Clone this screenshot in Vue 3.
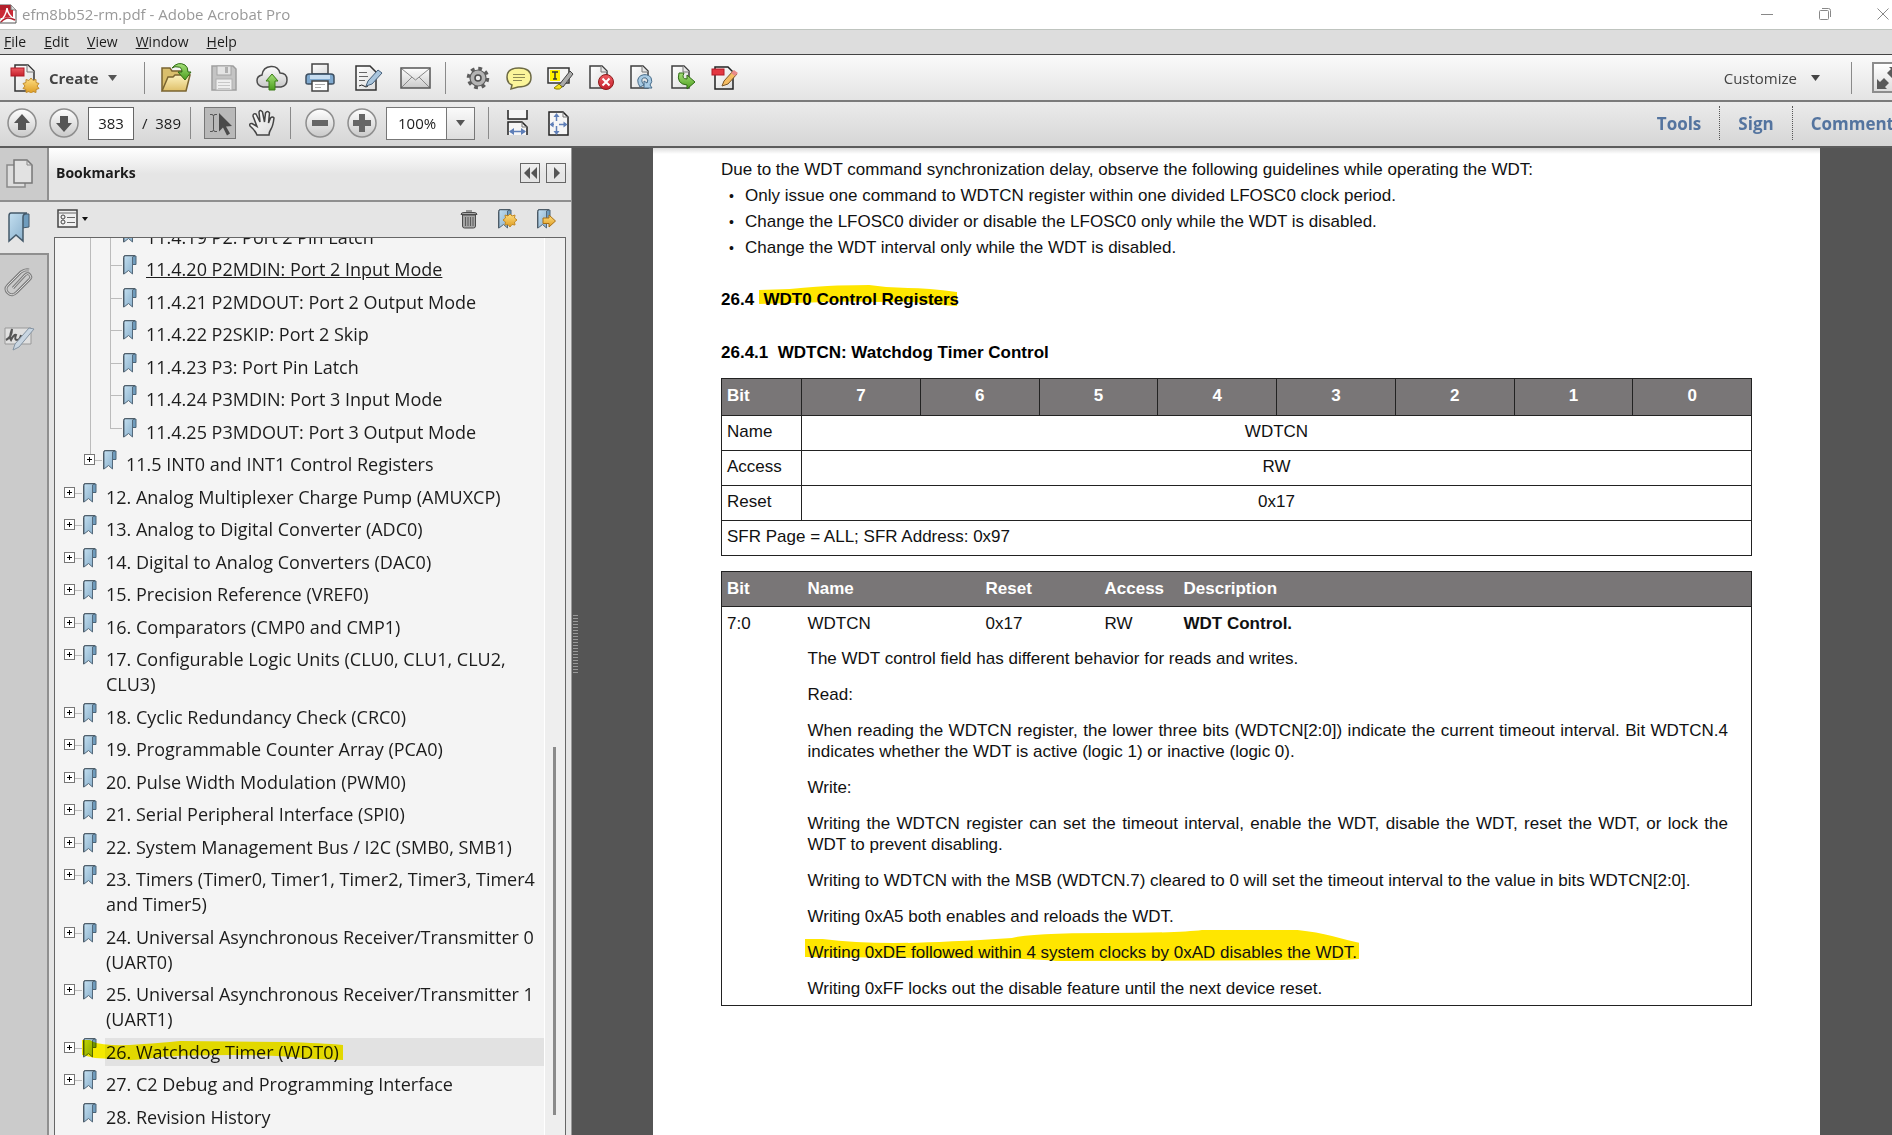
<script setup>
import { ref } from 'vue'

const page = ref('383')
const zoom = ref('100%')

const menus = ['File', 'Edit', 'View', 'Window', 'Help']

const bookmarks = [
  { level: 3, text: '11.4.19 P2: Port 2 Pin Latch' },
  { level: 3, text: '11.4.20 P2MDIN: Port 2 Input Mode', current: true },
  { level: 3, text: '11.4.21 P2MDOUT: Port 2 Output Mode' },
  { level: 3, text: '11.4.22 P2SKIP: Port 2 Skip' },
  { level: 3, text: '11.4.23 P3: Port Pin Latch' },
  { level: 3, text: '11.4.24 P3MDIN: Port 3 Input Mode' },
  { level: 3, text: '11.4.25 P3MDOUT: Port 3 Output Mode', last: true },
  { level: 2, text: '11.5 INT0 and INT1 Control Registers', children: true },
  { level: 1, text: '12. Analog Multiplexer Charge Pump (AMUXCP)', children: true },
  { level: 1, text: '13. Analog to Digital Converter (ADC0)', children: true },
  { level: 1, text: '14. Digital to Analog Converters (DAC0)', children: true },
  { level: 1, text: '15. Precision Reference (VREF0)', children: true },
  { level: 1, text: '16. Comparators (CMP0 and CMP1)', children: true },
  { level: 1, text: '17. Configurable Logic Units (CLU0, CLU1, CLU2, CLU3)', children: true },
  { level: 1, text: '18. Cyclic Redundancy Check (CRC0)', children: true },
  { level: 1, text: '19. Programmable Counter Array (PCA0)', children: true },
  { level: 1, text: '20. Pulse Width Modulation (PWM0)', children: true },
  { level: 1, text: '21. Serial Peripheral Interface (SPI0)', children: true },
  { level: 1, text: '22. System Management Bus / I2C (SMB0, SMB1)', children: true },
  { level: 1, text: '23. Timers (Timer0, Timer1, Timer2, Timer3, Timer4 and Timer5)', children: true },
  { level: 1, text: '24. Universal Asynchronous Receiver/Transmitter 0 (UART0)', children: true },
  { level: 1, text: '25. Universal Asynchronous Receiver/Transmitter 1 (UART1)', children: true },
  { level: 1, text: '26. Watchdog Timer (WDT0)', children: true, marked: true },
  { level: 1, text: '27. C2 Debug and Programming Interface', children: true },
  { level: 1, text: '28. Revision History' }
]

const bits = [7, 6, 5, 4, 3, 2, 1, 0]
const fields = [
  ['Name', 'WDTCN'],
  ['Access', 'RW'],
  ['Reset', '0x17']
]
</script>

<template>
  <div class="app">
    <svg class="defs" width="0" height="0" aria-hidden="true">
      <defs>
        <linearGradient id="g-blue" x1="0" y1="0" x2="1" y2="1">
          <stop offset="0" stop-color="#c3dff0" /><stop offset="1" stop-color="#85acc9" />
        </linearGradient>
        <linearGradient id="g-folder" x1="0" y1="0" x2="0" y2="1">
          <stop offset="0" stop-color="#fdf3c0" /><stop offset="1" stop-color="#dfc069" />
        </linearGradient>
        <linearGradient id="g-green" x1="0" y1="0" x2="0" y2="1">
          <stop offset="0" stop-color="#a5e07a" /><stop offset="1" stop-color="#4c9e1c" />
        </linearGradient>
        <linearGradient id="g-grey" x1="0" y1="0" x2="0" y2="1">
          <stop offset="0" stop-color="#ffffff" /><stop offset="1" stop-color="#c9c9c9" />
        </linearGradient>
        <linearGradient id="g-paper" x1="0" y1="0" x2="1" y2="1">
          <stop offset="0" stop-color="#ffffff" /><stop offset="1" stop-color="#dcdcdc" />
        </linearGradient>
        <linearGradient id="g-gold" x1="0" y1="0" x2="0" y2="1">
          <stop offset="0" stop-color="#ffe083" /><stop offset="1" stop-color="#dd9a1f" />
        </linearGradient>
        <linearGradient id="g-red" x1="0" y1="0" x2="0" y2="1">
          <stop offset="0" stop-color="#ee5b62" /><stop offset="1" stop-color="#c4202b" />
        </linearGradient>
        <symbol id="i-bookmark" viewBox="0 0 15 20">
          <path d="M9 1h5v8.500h-4z" fill="#6f9cbd" stroke="#4d6577" />
          <path d="M2.500.7h10L10.500 2v17L6.500 15.500 2 19V2z" fill="url(#g-blue)" stroke="#54697b" />
          <path d="M1.500 19.300V2.500Q1.500.6 3.500.6H13" fill="none" stroke="#4d5b66" />
        </symbol>
        <symbol id="i-page" viewBox="0 0 20 24">
          <path d="M1 1h12l5 5v17H1z" fill="url(#g-paper)" stroke="#3f3f3f" stroke-width="1.500" />
          <path d="M12 1v6h6" fill="#e8e8e8" stroke="#777" />
        </symbol>
      </defs>
    </svg>

    <header class="titlebar">
      <svg class="app-icon" width="17" height="20" viewBox="0 0 17 20">
        <path d="M0 1h11l5 5v13H0z" fill="#fff" stroke="#555" />
        <path d="M0 1h11v13H0z" fill="#b3202c" />
        <path d="M11 1v5h5" fill="#ddd" stroke="#777" />
        <path d="M0 6h13v8H0z" fill="#c92a35" />
        <path d="M0 17Q6 12 7 4Q8 12 15 15Q7 12 0 17" fill="none" stroke="#fff" stroke-width="1.500" />
        <path d="M1 18Q5 14 8 14T15 16" fill="none" stroke="#b3202c" stroke-width="1.500" />
      </svg>
      <h1>efm8bb52-rm.pdf - Adobe Acrobat Pro</h1>
      <div class="window-buttons">
        <button aria-label="Minimize"><svg width="14" height="14" viewBox="0 0 14 14"><path d="M1 7.500h12" stroke="#888" /></svg></button>
        <button aria-label="Restore"><svg width="14" height="14" viewBox="0 0 14 14"><rect x="1.500" y="3.500" width="9" height="9" rx="1" fill="none" stroke="#888" /><path d="M4 1.500h6.500q2 0 2 2V10" fill="none" stroke="#888" /></svg></button>
        <button aria-label="Close"><svg width="14" height="14" viewBox="0 0 14 14"><path d="M1.500 1.500l11 11m0-11l-11 11" stroke="#888" /></svg></button>
      </div>
    </header>

    <nav class="menubar">
      <button v-for="m in menus" :key="m"><u>{{ m[0] }}</u>{{ m.slice(1) }}</button>
    </nav>

    <div class="toolbar main-tools">
      <button class="create">
        <svg width="30" height="30" viewBox="0 0 30 30">
          <path d="M5 2h13l6 6v20H5z" fill="url(#g-paper)" stroke="#333" stroke-width="1.500" />
          <path d="M17 2v7h7" fill="#eee" stroke="#777" />
          <rect x="1" y="5" width="13" height="8" fill="url(#g-red)" stroke="#b01b26" />
          <path d="M21 15l2 2.500 3-1 0 3 3 1-2 2.500 2 2.500-3 1 0 3-3-1-2 2-2-2-3 1 0-3-3-1 2-2.500-2-2.500 3-1 0-3 3 1z" fill="url(#g-gold)" stroke="#c08c31" />
        </svg>
        <span>Create</span>
        <svg width="9" height="6" viewBox="0 0 9 6"><path d="M0 0h9L4.500 6z" fill="#555" /></svg>
      </button>
      <span class="sep"></span>
      <div class="group wide">
        <button aria-label="Open">
          <svg width="32" height="32" viewBox="0 0 32 32">
            <path d="M2 28V6h8l2 3h10v18z" fill="#d9be6c" stroke="#7a6430" stroke-width="1.500" />
            <path d="M2 29L8 15h5l2-2h15l-4 16z" fill="url(#g-folder)" stroke="#7a6430" stroke-width="1.500" />
            <path d="M12 6Q18-1 25 3Q28 5 28 10h3l-6 8-7-8h4Q22 5 18 5Q15 4 12 6z" fill="url(#g-green)" stroke="#2f6b14" />
          </svg>
        </button>
        <button aria-label="Save">
          <svg width="32" height="32" viewBox="0 0 32 32">
            <path d="M4 4h21l3 3v21H4z" fill="#c4c4c4" stroke="#9e9e9e" stroke-width="1.500" />
            <rect x="9" y="4" width="14" height="9" fill="#e4e4e4" stroke="#a4a4a4" />
            <rect x="17" y="5" width="3" height="6" fill="#b0b0b0" />
            <rect x="8" y="17" width="16" height="11" fill="#efefef" stroke="#b0b0b0" />
            <path d="M10 20.500h12M10 23.500h12M10 26.500h12" stroke="#c8c8c8" />
          </svg>
        </button>
        <button aria-label="Upload">
          <svg width="32" height="32" viewBox="0 0 32 32">
            <path d="M7 25Q1 24 1 18.500Q1 14 6 13Q7 5 15 4.500Q22 4 24 11Q31 11 31 18Q31 24 25 25z" fill="url(#g-grey)" stroke="#4c4c4c" stroke-width="1.500" />
            <path d="M16 12l6 7h-3v9h-6v-9h-3z" fill="url(#g-green)" stroke="#3c7c18" />
          </svg>
        </button>
        <button aria-label="Print">
          <svg width="32" height="32" viewBox="0 0 32 32">
            <path d="M8 12V2h16v10z" fill="url(#g-paper)" stroke="#444" stroke-width="1.500" />
            <path d="M2 15q0-3 3-3h22q3 0 3 3v6q0 1-2 1H4q-2 0-2-1z" fill="#7fa9cf" stroke="#3e4f60" stroke-width="1.500" />
            <path d="M6 13h20v4H6z" fill="#c7ddf0" />
            <path d="M8 19h16v10H8z" fill="#fff" stroke="#444" stroke-width="1.500" />
            <path d="M11 22.500h10M11 25.500h6" stroke="#aaa" />
          </svg>
        </button>
        <button aria-label="Edit">
          <svg width="32" height="32" viewBox="0 0 32 32">
            <path d="M4 4h14l6 6v18H4z" fill="url(#g-paper)" stroke="#333" stroke-width="1.500" />
            <path d="M7 10.500h8M7 14.500h9M7 18.500h6" stroke="#666" />
            <path d="M7 24q3-2 5 0t4 0" fill="none" stroke="#222" />
            <path d="M14 24l2-5L26 8l4 3-10 11z" fill="#a9c5dd" stroke="#46607a" />
          </svg>
        </button>
        <button aria-label="Email">
          <svg width="32" height="32" viewBox="0 0 32 32">
            <rect x="1" y="6" width="29" height="20" fill="url(#g-grey)" stroke="#555" stroke-width="1.500" />
            <path d="M2 7l13.500 11L29 7M2 25l10-10m17 10L19 15" fill="none" stroke="#888" />
          </svg>
        </button>
      </div>
      <span class="sep"></span>
      <div class="group">
        <button aria-label="Preferences">
          <svg width="32" height="32" viewBox="0 0 32 32">
            <circle cx="16" cy="16" r="9.500" fill="none" stroke="#5c5c5c" stroke-width="3.500" stroke-dasharray="3.730 3.730" />
            <circle cx="16" cy="16" r="8" fill="#b4b4b4" stroke="#5c5c5c" stroke-width="1.200" />
            <circle cx="16" cy="16" r="3" fill="#eee" stroke="#4c4c4c" stroke-width="1.500" />
          </svg>
        </button>
        <button aria-label="Comment">
          <svg width="32" height="32" viewBox="0 0 32 32">
            <path d="M16 6q12 0 12 9.500T15 25l-7 2 1-4q-5-2-5-8Q4 6 16 6z" fill="#fbf59a" stroke="#6e6b45" stroke-width="1.500" />
            <path d="M10 12.500h12M10 15.500h12M10 18.500h9" stroke="#8d8a55" />
          </svg>
        </button>
        <button aria-label="Highlight">
          <svg width="32" height="32" viewBox="0 0 32 32">
            <rect x="4" y="6" width="21" height="15" fill="#f4f4f4" stroke="#333" stroke-width="1.500" />
            <rect x="6" y="8" width="10" height="11" fill="#fff100" />
            <path d="M8 10h6M11 10v7M9 17h4" stroke="#333" stroke-width="1.500" />
            <path d="M15 23L26 9l3 3-10 13z" fill="#aaa" stroke="#444" />
            <path d="M10 26l5-4 3 3q-2 3-6 2z" fill="#f4e21c" stroke="#8c8000" />
          </svg>
        </button>
        <button aria-label="Delete page">
          <svg width="32" height="32" viewBox="0 0 32 32">
            <use href="#i-page" x="4" y="3" width="20" height="24" />
            <circle cx="21" cy="20" r="7.500" fill="url(#g-red)" stroke="#8c1a1a" />
            <path d="M17.500 16.500l7 7m0-7l-7 7" stroke="#fff" stroke-width="2" />
          </svg>
        </button>
        <button aria-label="Rotate page">
          <svg width="32" height="32" viewBox="0 0 32 32">
            <use href="#i-page" x="4" y="3" width="20" height="24" />
            <path d="M14 25Q9 17 15 13.500Q21 11 25 15.500Q27 20 24 23l2 3h-8v-7l3 2q2-3-1-5-5-1-4 4l2 3z" fill="#a9cbe4" stroke="#476b88" />
          </svg>
        </button>
        <button aria-label="Extract page">
          <svg width="32" height="32" viewBox="0 0 32 32">
            <use href="#i-page" x="4" y="3" width="20" height="24" />
            <path d="M12 11Q9 22 20 23v4l8-7-8-7v4q-6 0-3-6z" fill="url(#g-green)" stroke="#2f6b14" />
          </svg>
        </button>
        <button aria-label="Edit document">
          <svg width="32" height="32" viewBox="0 0 32 32">
            <path d="M7 5h13l5 5v17H7z" fill="url(#g-paper)" stroke="#222" stroke-width="1.500" />
            <rect x="4" y="7" width="12" height="6" fill="#e33741" stroke="#b01b26" />
            <path d="M14 24l2-5L25 9l4 3-9 10z" fill="#f4bc62" stroke="#7a5524" />
            <path d="M23 11l3-3 4 3-3 3z" fill="#e88a8a" />
          </svg>
        </button>
      </div>
      <div class="right">
        <button class="customize">Customize
          <svg width="9" height="6" viewBox="0 0 9 6"><path d="M0 0h9L4.500 6z" fill="#444" /></svg>
        </button>
        <span class="sep"></span>
        <button class="fullscreen" aria-label="Full screen">
          <svg width="28" height="28" viewBox="0 0 28 28"><path d="M3 25V15l3 3 4-4 5 5-4 4 2 2zM25 3v10l-3-3-4 4-5-5 4-4-2-2z" fill="#5a5a5a" /></svg>
        </button>
      </div>
    </div>

    <div class="toolbar page-tools">
      <button class="round" aria-label="Previous page">
        <svg width="30" height="30" viewBox="0 0 30 30"><circle cx="15" cy="15" r="14" fill="url(#g-grey)" stroke="#8e8e8e" stroke-width="1.500" /><path d="M15 6l8 9h-4v7h-8v-7H7z" fill="#555" /></svg>
      </button>
      <button class="round" aria-label="Next page">
        <svg width="30" height="30" viewBox="0 0 30 30"><circle cx="15" cy="15" r="14" fill="url(#g-grey)" stroke="#8e8e8e" stroke-width="1.500" /><path d="M15 24l8-9h-4V8h-8v7H7z" fill="#555" /></svg>
      </button>
      <label class="page-box"><input v-model="page" aria-label="Page number" /><span>/&nbsp; 389</span></label>
      <span class="sep"></span>
      <button class="tool selected" aria-label="Select">
        <svg width="30" height="30" viewBox="0 0 30 30">
          <path d="M5 6.500h2q1.500 0 1.500 2v13q0 2-1.500 2H5M12 6.500h-2q-1.500 0-1.500 2M12 23.500h-2q-1.500 0-1.500-2" fill="none" stroke="#555" />
          <path d="M14 5l13 13-6 .5 4 7-3 2-4-8-4 4z" fill="#4a4a4a" />
        </svg>
      </button>
      <button class="tool" aria-label="Hand">
        <svg width="30" height="30" viewBox="0 0 30 30">
          <path d="M10 27Q8 22 3 18q-1-3 2-2.500l5 3L6 8q0-3 3-2l4 8-1-10q1-3 3.500 0l2 10 1-9q2-3 4 0l-1 10 2-5q2-2 3.500 0-1 8-3 11t-2 6z" fill="url(#g-paper)" stroke="#444" stroke-width="1.500" />
        </svg>
      </button>
      <span class="sep"></span>
      <button class="round" aria-label="Zoom out">
        <svg width="30" height="30" viewBox="0 0 30 30"><circle cx="15" cy="15" r="14" fill="url(#g-grey)" stroke="#8e8e8e" stroke-width="1.500" /><path d="M7 12h16v6H7z" fill="#666" /></svg>
      </button>
      <button class="round" aria-label="Zoom in">
        <svg width="30" height="30" viewBox="0 0 30 30"><circle cx="15" cy="15" r="14" fill="url(#g-grey)" stroke="#8e8e8e" stroke-width="1.500" /><path d="M12 6h6v6h6v6h-6v6h-6v-6H6v-6h6z" fill="#666" /></svg>
      </button>
      <div class="zoom-box">
        <select v-model="zoom" aria-label="Zoom level"><option>75%</option><option>100%</option><option>125%</option></select>
        <span class="drop"><svg width="9" height="6" viewBox="0 0 9 6"><path d="M0 0h9L4.500 6z" fill="#555" /></svg></span>
      </div>
      <span class="sep"></span>
      <button class="fit" aria-label="Fit width">
        <svg width="24" height="28" viewBox="0 0 24 28">
          <path d="M2 1v9h19V1" fill="#f6f6f6" stroke="#222" stroke-width="1.500" />
          <path d="M2 26V13h14l5 5v8" fill="#f6f6f6" stroke="#222" stroke-width="1.500" />
          <path d="M16 13v5h5" fill="none" stroke="#777" />
          <path d="M4 22.500h15" stroke="#5f7fb8" stroke-width="1.500" /><path d="M3 22.500l5-3.500v7zM20 22.500L15 19v7z" fill="#5f7fb8" />
        </svg>
      </button>
      <button class="fit" aria-label="Fit page">
        <svg width="24" height="28" viewBox="0 0 24 28">
          <path d="M2 3h14l5 5v18H2z" fill="#f6f6f6" stroke="#222" stroke-width="1.500" />
          <path d="M16 3v5h5" fill="none" stroke="#777" />
          <path d="M9.500 6v6m0 5v7M4 15.500h3m5 0h7" stroke="#5f7fb8" stroke-width="1.500" />
          <path d="M9.500 4l3 4h-6zM9.500 26l3-4h-6zM2.500 15.500l4-3v6zM20.500 15.500l-4-3v6z" fill="#5f7fb8" />
        </svg>
      </button>
      <div class="right panes">
        <button>Tools</button>
        <button>Sign</button>
        <button>Comment</button>
      </div>
    </div>

    <div class="workspace">
      <div class="rail">
        <button class="rail-item first" aria-label="Page thumbnails">
          <svg width="30" height="32" viewBox="0 0 30 32">
            <path d="M3 7h18v22H3z" fill="#ddd" stroke="#8b8b8b" stroke-width="1.500" />
            <path d="M10 2h13l5 5v18H10z" fill="#e2e2e2" stroke="#777" stroke-width="1.500" /><path d="M23 2v5h5" fill="none" stroke="#888" />
          </svg>
        </button>
        <button class="rail-item active" aria-label="Bookmarks">
          <svg width="24" height="31" viewBox="0 0 24 31">
            <path d="M14 2h8v13l-7 1z" fill="#6f9cbd" stroke="#44596a" />
            <path d="M4 1h16q-4 1-4 4v24l-7-6-7 6V4q0-3 2-3z" fill="url(#g-blue)" stroke="#44596a" stroke-width="1.500" />
          </svg>
        </button>
        <button class="rail-item" aria-label="Attachments">
          <svg width="30" height="30" viewBox="0 0 30 30">
            <path d="M9 20L21 7q3-3 5 0t-1 5L13 24q-5 5-9 1t0-8L17 4q4-3 8-2" fill="none" stroke="#808080" stroke-width="3" />
            <path d="M9 20L21 7q3-3 5 0t-1 5L13 24q-5 5-9 1t0-8L17 4q4-3 8-2" fill="none" stroke="#d8d8d8" />
          </svg>
        </button>
        <button class="rail-item" aria-label="Signatures">
          <svg width="32" height="26" viewBox="0 0 32 26">
            <path d="M2 3h26v16H2z" fill="#e0e0e0" stroke="#999" />
            <path d="M3 15Q9 12 9 4Q6 12 8 15q3-6 5-5-2 5 1 5t4-5" fill="none" stroke="#555" stroke-width="2" />
            <path d="M10 25l2-6L26 3l5 1-15 18z" fill="#c9d6e2" stroke="#8594a3" />
          </svg>
        </button>
      </div>

      <aside class="panel">
        <div class="panel-head">
          <h2>Bookmarks</h2>
          <button aria-label="Collapse"><svg width="14" height="12" viewBox="0 0 14 12"><path d="M7 0v12L1 6zM14 0v12L8 6z" fill="#555" /></svg></button>
          <button aria-label="Expand"><svg width="14" height="12" viewBox="0 0 14 12"><path d="M5 0v12l6-6z" fill="#555" /></svg></button>
        </div>
        <div class="panel-tools">
          <button class="options" aria-label="Options">
            <svg width="32" height="20" viewBox="0 0 32 20">
              <rect x="1" y="1" width="19" height="17" fill="#f0f0f0" stroke="#444" stroke-width="1.500" />
              <circle cx="6" cy="8" r="2" fill="none" stroke="#444" /><circle cx="6" cy="13" r="2" fill="none" stroke="#444" />
              <path d="M2 4h17M10 8.500h8M10 13.500h8" stroke="#666" />
              <path d="M25 8h6l-3 4z" fill="#111" />
            </svg>
          </button>
          <button aria-label="Delete bookmark">
            <svg width="18" height="20" viewBox="0 0 18 20">
              <path d="M6 2h6M1 5.500q0-2 3-2h10q3 0 3 2z" fill="#aaa" stroke="#4b4b4b" />
              <path d="M2.500 6h13v11q0 2-2 2h-9q-2 0-2-2z" fill="#a5a5a5" stroke="#4b4b4b" />
              <path d="M5.500 8v9M8 8v9M10.500 8v9M13 8v9" stroke="#5a5a5a" />
            </svg>
          </button>
          <button aria-label="New bookmark">
            <svg width="20" height="20" viewBox="0 0 20 20">
              <use href="#i-bookmark" x="0" y="0" width="15" height="20" />
              <path d="M13 5l2 2 3-1-.5 3 2.500 2-2.500 2 .5 3-3-.5-2 2.500-2-2.500-3 .5.5-3L6 11l2.500-2L8 6l3 1z" fill="url(#g-gold)" stroke="#c48a24" />
            </svg>
          </button>
          <button aria-label="Go to bookmark">
            <svg width="20" height="20" viewBox="0 0 20 20">
              <use href="#i-bookmark" x="0" y="0" width="15" height="20" />
              <path d="M7 9h6V6l6.500 6-6.500 6v-3.500H7z" fill="url(#g-gold)" stroke="#a86f14" />
            </svg>
          </button>
        </div>
        <div class="tree-box">
          <ul class="tree">
            <li v-for="b in bookmarks" :key="b.text" :class="['level-' + b.level, { last: b.last }]">
              <span v-if="b.level > 1" class="indent"></span>
              <span v-if="b.level > 2" class="indent line"></span>
              <span class="joint">
                <button v-if="b.children" class="toggle" aria-label="Expand section">
                  <svg width="11" height="11" viewBox="0 0 11 11"><rect x=".5" y=".5" width="10" height="10" fill="#fff" stroke="#777" /><path d="M3 5.500h5M5.500 3v5" stroke="#000" /></svg>
                </button>
              </span>
              <svg class="mark" width="15" height="20"><use href="#i-bookmark" /></svg>
              <a href="#" :class="{ current: b.current, marked: b.marked }">{{ b.text }}</a>
              <svg v-if="b.marked" class="stroke" width="262" height="22" viewBox="0 0 262 22">
                <path d="M0 2H8Q12 6 30 7T98 3L203 4Q240 5 261 7V22L233 21Q200 17 150 17T78 19Q60 22 48 22L13 20 0 17z" fill="#fff400" />
              </svg>
            </li>
          </ul>
          <div class="scroll"><span class="thumb"></span></div>
        </div>
      </aside>

      <main class="viewer">
        <span class="grip"></span>
        <article class="sheet">
          <p class="lead">Due to the WDT command synchronization delay, observe the following guidelines while operating the WDT:</p>
          <ul class="rules">
            <li>Only issue one command to WDTCN register within one divided LFOSC0 clock period.</li>
            <li>Change the LFOSC0 divider or disable the LFOSC0 only while the WDT is disabled.</li>
            <li>Change the WDT interval only while the WDT is disabled.</li>
          </ul>
          <h3>26.4&nbsp; <span class="hl">WDT0 Control Registers
            <svg class="hl-title" viewBox="0 0 200 22" preserveAspectRatio="none"><path d="M0 5L31 4Q60 1 79 .5T111 0Q130 3 150 3T200 7V21Q180 20 165 18T125 17Q90 16 65 17T30 18L0 19z" fill="#ffe600" /></svg></span></h3>
          <h4>26.4.1&nbsp; WDTCN: Watchdog Timer Control</h4>

          <table class="register">
            <thead>
              <tr><th class="key">Bit</th><th v-for="n in bits" :key="n">{{ n }}</th></tr>
            </thead>
            <tbody>
              <tr v-for="f in fields" :key="f[0]"><td class="key">{{ f[0] }}</td><td colspan="8">{{ f[1] }}</td></tr>
              <tr><td class="key" colspan="9">SFR Page = ALL; SFR Address: 0x97</td></tr>
            </tbody>
          </table>

          <table class="detail">
            <colgroup><col class="c-bit" /><col class="c-name" /><col class="c-reset" /><col class="c-access" /><col /></colgroup>
            <thead>
              <tr><th>Bit</th><th>Name</th><th>Reset</th><th>Access</th><th>Description</th></tr>
            </thead>
            <tbody>
              <tr class="summary"><td>7:0</td><td>WDTCN</td><td>0x17</td><td>RW</td><td><b>WDT Control.</b></td></tr>
              <tr>
                <td></td>
                <td colspan="4" class="text">
                  <p>The WDT control field has different behavior for reads and writes.</p>
                  <p>Read:</p>
                  <p>When reading the WDTCN register, the lower three bits (WDTCN[2:0]) indicate the current timeout interval. Bit WDTCN.4 indicates whether the WDT is active (logic 1) or inactive (logic 0).</p>
                  <p>Write:</p>
                  <p>Writing the WDTCN register can set the timeout interval, enable the WDT, disable the WDT, reset the WDT, or lock the WDT to prevent disabling.</p>
                  <p>Writing to WDTCN with the MSB (WDTCN.7) cleared to 0 will set the timeout interval to the value in bits WDTCN[2:0].</p>
                  <p>Writing 0xA5 both enables and reloads the WDT.</p>
                  <p><span class="hl">Writing 0xDE followed within 4 system clocks by 0xAD disables the WDT.
                    <svg class="hl-line" viewBox="0 0 563 31" preserveAspectRatio="none"><path d="M0 9H18Q50 13 90 13T210 8Q230 3 305 3T403 0H500Q520 2 535 6T563 13V29L545 30 255 31Q230 28 145 28L0 27z" fill="#ffe600" /></svg></span></p>
                  <p>Writing 0xFF locks out the disable feature until the next device reset.</p>
                </td>
              </tr>
            </tbody>
          </table>
        </article>
      </main>
    </div>
  </div>
</template>

<style>
body { margin: 0; overflow: hidden; }
</style>

<style scoped>
.app {
  display: flex;
  flex-direction: column;
  height: 100vh;
  overflow: hidden;
  font-family: "Open Sans", "Noto Sans", sans-serif;
  color: #1c1c1c;
  background: #555;
}
.defs { position: absolute; }
* { box-sizing: border-box; }
button, input, select { font: inherit; color: inherit; }
button { padding: 0; border: 0; background: none; display: flex; align-items: center; justify-content: center; flex: none; }
svg { display: block; flex: none; }
h1, h2, h3, h4, p, ul { margin: 0; padding: 0; }

.titlebar { display: flex; align-items: center; height: 30px; padding-bottom: 2px; background: #fff; border-bottom: 1px solid #bfc4bf; flex: none; }
.titlebar h1 { flex: 1; margin-left: 5px; font-size: 15px; font-weight: 400; color: #999; }
.window-buttons { display: flex; gap: 44px; padding-right: 2px; }

.menubar { display: flex; gap: 18px; height: 25px; padding: 0 0 2px 4px; background: #ddd; border-bottom: 1px solid #444; flex: none; font-size: 14px; }

.toolbar { display: flex; align-items: center; overflow: hidden; flex: none; border-bottom: 2px solid #7b7b7b; }
.main-tools { height: 47px; padding-left: 10px; background: linear-gradient(#fafafa, #e4e4e4); }
.page-tools { height: 46px; padding: 0 0 2px 7px; background: linear-gradient(#ebebeb, #d6d6d6); border-bottom-color: #5c5c5c; font-size: 15px; }
.sep { width: 1px; height: 32px; background: #8a8a8a; flex: none; }
.create { gap: 9px; width: 134px; justify-content: flex-start; font-size: 15px; font-weight: 700; color: #444; }
.group { display: flex; margin-left: 11px; }
.group button { width: 41px; height: 32px; }
.group.wide { margin: 0 5px 0 7px; }
.group.wide button { width: 48px; }
.right { display: flex; align-items: center; margin-left: auto; }
.customize { gap: 14px; margin-right: 31px; font-size: 15px; color: #444; }
.fullscreen { width: 32px; height: 31px; margin: 0 -12px 0 20px; border: 2px solid #8c8c8c; background: linear-gradient(#fff, #ddd); }

.round { width: 42px; justify-content: flex-start; }
.page-box { display: flex; align-items: center; width: 99px; }
.page-box input { width: 46px; height: 33px; margin: 0 8px 0 -3px; padding: 0; text-align: center; border: 1px solid #666; background: #fff; }
.tool { width: 32px; height: 32px; margin-left: 13px; border: 1px solid transparent; }
.tool + .tool { margin: 0 12px 0 10px; }
.tool.selected { background: #b9b9b9; border-color: #777; }
.tool ~ .sep + .round { margin-left: 14px; }
.zoom-box { position: relative; width: 89px; height: 33px; margin: 0 13px 0 -3px; border: 1px solid #777; background: #fff; }
.zoom-box select { width: 100%; height: 100%; padding: 0 0 0 11px; border: 0; background: none; appearance: none; }
.drop { position: absolute; top: 0; right: 0; width: 28px; height: 31px; display: flex; align-items: center; justify-content: center; border-left: 1px solid #777; background: linear-gradient(#fafafa, #ddd); pointer-events: none; }
.fit { width: 24px; margin-left: 17px; }
.panes { font-size: 17px; font-weight: 700; color: #54749f; margin-right: -20px; }
.panes button { height: 34px; padding: 0 18px; border-left: 1px dotted #555; }
.panes button:first-child { border-left: 0; }

.workspace { display: flex; flex: 1; min-height: 0; }
.rail { width: 49px; flex: none; background: #cbcbcb; border-right: 2px solid #8f8f8f; }
.rail-item { width: 47px; height: 55px; padding-right: 9px; }
.rail-item.first { height: 54px; border-bottom: 2px solid #8f8f8f; }
.rail-item.active { width: 49px; height: 53px; padding-right: 11px; background: #e5e5e5; border-bottom: 2px solid #8f8f8f; position: relative; }
.panel { display: flex; flex-direction: column; width: 523px; flex: none; background: #e5e5e5; border-right: 1px solid #999; }
.panel-head { display: flex; align-items: center; gap: 6px; height: 54px; padding: 0 5px 2px 7px; border-bottom: 2px solid #8f8f8f; background: linear-gradient(#fff, #e5e5e5 50%); flex: none; }
.panel-head h2 { flex: 1; padding-bottom: 2px; font-size: 14px; font-weight: 700; }
.panel-head button { width: 20px; height: 20px; border: 1px solid #666; }
.panel-tools { display: flex; align-items: center; gap: 19px; height: 35px; padding: 0 15px 2px 8px; flex: none; }
.options { margin-right: auto; }
.tree-box { position: relative; display: flex; flex: 1; min-height: 0; margin: 0 5px; overflow: hidden; background: #f4f4f4; border: 1px solid #666; border-bottom: 0; }
.tree { flex: 1; margin-top: -15px; list-style: none; font-size: 18px; line-height: 25px; }
.tree li { position: relative; display: flex; align-items: stretch; padding-left: 9px; }
.tree li:nth-child(odd) a { margin-bottom: 4px; }
.tree li:nth-child(even) a { margin-bottom: 5px; }
.indent { width: 20px; flex: none; }
.indent.line { background: linear-gradient(#bbb, #bbb) 6px 0 / 1px 100% no-repeat; }
.joint { width: 18px; flex: none; padding-top: 4px; background: linear-gradient(#bbb, #bbb) 11px 10px / 7px 1px no-repeat; }
.level-2 .joint { background: linear-gradient(#bbb, #bbb) 11px 10px / 7px 1px no-repeat, linear-gradient(#bbb, #bbb) 6px 0 / 1px 4px no-repeat; }
.level-3 .joint { background: linear-gradient(#bbb, #bbb) 6px 10px / 12px 1px no-repeat, linear-gradient(#bbb, #bbb) 6px 0 / 1px 100% no-repeat; }
.level-3.last .joint { background: linear-gradient(#bbb, #bbb) 6px 10px / 12px 1px no-repeat, linear-gradient(#bbb, #bbb) 6px 0 / 1px 10px no-repeat; }
.tree li:last-child .joint { background: none; }
.tree a { flex: 1; margin-left: 8px; padding: 2px 0 1px 1px; color: #1c1c1c; text-decoration: none; }
.tree a.current { text-decoration: underline; }
.tree a.marked { background: #e2e2e2; }
.stroke { position: absolute; left: 27px; top: 0; mix-blend-mode: multiply; pointer-events: none; }
.scroll { position: relative; width: 21px; flex: none; background: #eee; border-left: 1px solid #fff; }
.thumb { position: absolute; right: 9px; bottom: 20px; width: 3px; height: 41%; background: #8a8a8a; }

.viewer { position: relative; flex: 1; min-width: 0; padding: 0 72px 0 81px; background: #555; overflow: hidden; }
.grip { position: absolute; left: 1px; top: 52%; margin-top: -46px; width: 5px; height: 60px; background: repeating-linear-gradient(#999 0 1px, transparent 1px 3px); }
.sheet { min-height: 100%; padding: 9px 68px 0; background: linear-gradient(#ddd, #fff 6px); font-family: "Liberation Sans", Arial, sans-serif; font-size: 17px; line-height: 26px; color: #111; }
.rules { list-style: none; }
.rules li { display: flex; }
.rules li::before { content: "•"; width: 16px; padding-left: 8px; font-size: 14px; flex: none; }
.sheet h3, .sheet h4 { font-size: 17px; font-weight: 700; line-height: 26px; color: #000; }
.sheet h3 { margin-top: 26px; }
.sheet h4 { margin-top: 27px; }
.hl { position: relative; isolation: isolate; display: inline-block; }
.hl svg { position: absolute; z-index: -1; }
.hl-title { left: -5px; top: -2px; width: calc(100% + 3px); height: 22px; }
.hl-line { left: -3px; top: -12px; width: calc(100% + 5px); height: 31px; }

table { width: 100%; border-collapse: collapse; table-layout: fixed; line-height: 21px; border: 1px solid #222; }
th { background: #797677; color: #fff; font-weight: 700; }
th, td { padding: 0 5px 2px; height: 35px; }
.register { margin-top: 12px; }
.register th, .register td { padding-bottom: 4px; border: 1px solid #222; text-align: center; }
.register th { height: 37px; }
.register td { height: 35px; }
.register th.key, .register td.key { width: 80px; text-align: left; }
.detail { margin-top: 15px; }
.detail th, .detail td { text-align: left; }
.detail thead { border-bottom: 1px solid #222; }
.c-bit { width: 81px; }
.c-name { width: 178px; }
.c-reset { width: 119px; }
.c-access { width: 79px; }
.detail td.text { padding: 6px 23px 6px 5px; }
.text p { text-align: justify; }
.text p + p { margin-top: 15px; }
</style>
